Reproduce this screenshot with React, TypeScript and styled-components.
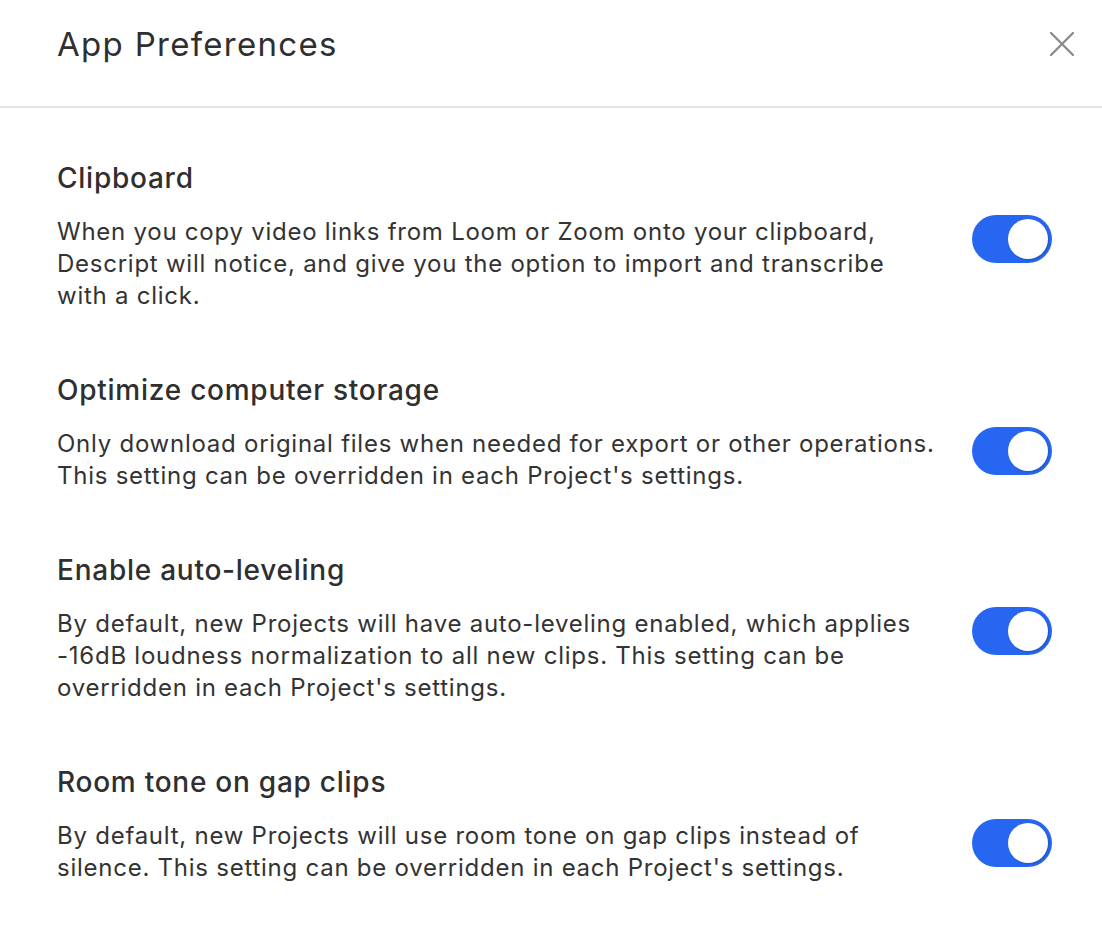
import React, { useState } from 'react';
import styled, { createGlobalStyle } from 'styled-components';

const GlobalStyle = createGlobalStyle`
  body {
    margin: 0;
    background: #ffffff;
    font-family: Inter, 'Liberation Sans', sans-serif;
    color: #2f2f2f;
  }
`;

interface ISetting {
  id: string;
  title: string;
  description: string;
}

const settings: ISetting[] = [
  {
    id: 'clipboard',
    title: 'Clipboard',
    description:
      'When you copy video links from Loom or Zoom onto your clipboard, Descript will notice, and give you the option to import and transcribe with a click.',
  },
  {
    id: 'storage',
    title: 'Optimize computer storage',
    description:
      "Only download original files when needed for export or other operations. This setting can be overridden in each Project's settings.",
  },
  {
    id: 'leveling',
    title: 'Enable auto-leveling',
    description:
      "By default, new Projects will have auto-leveling enabled, which applies -16dB loudness normalization to all new clips. This setting can be overridden in each Project's settings.",
  },
  {
    id: 'roomtone',
    title: 'Room tone on gap clips',
    description:
      "By default, new Projects will use room tone on gap clips instead of silence. This setting can be overridden in each Project's settings.",
  },
];

function App() {
  const [values, setValues] = useState<Record<string, boolean>>({
    clipboard: true,
    storage: true,
    leveling: true,
    roomtone: true,
  });

  return (
    <Container>
      <GlobalStyle />
      <Header>
        <Title>App Preferences</Title>
        <CloseButton aria-label="Close">
          <svg width="24" height="24" viewBox="0 0 24 24">
            <path
              d="M1 1 L23 23 M23 1 L1 23"
              stroke="#8c8c8c"
              strokeWidth="2.4"
              strokeLinecap="round"
            />
          </svg>
        </CloseButton>
      </Header>
      <Body>
        {settings.map((item) => (
          <Section key={item.id}>
            <Heading>{item.title}</Heading>
            <Row>
              <Description>{item.description}</Description>
              <Toggle
                on={values[item.id]}
                onClick={() =>
                  setValues({ ...values, [item.id]: !values[item.id] })
                }
              >
                <Knob on={values[item.id]} />
              </Toggle>
            </Row>
          </Section>
        ))}
      </Body>
    </Container>
  );
}

const Container = styled.div`
  width: 1102px;
  min-height: 936px;
  background: #ffffff;
`;

const Header = styled.div`
  height: 108px;
  border-bottom: 2px solid #e4e4e4;
  box-sizing: border-box;
  display: flex;
  align-items: center;
  justify-content: space-between;
  padding: 0 28px 18px 57px;
`;

const Title = styled.h1`
  margin: 0;
  font-size: 33px;
  letter-spacing: 1.3px;
  font-weight: 400;
  color: #2f2f2f;
`;

const CloseButton = styled.button`
  border: none;
  background: none;
  padding: 0;
  width: 24px;
  height: 24px;
  display: flex;
`;

const Body = styled.div`
  padding: 53px 50px 0 57px;
  display: flex;
  flex-direction: column;
  gap: 61px;
`;

const Section = styled.div`
  display: flex;
  flex-direction: column;
  gap: 21px;
`;

const Heading = styled.h2`
  margin: 0;
  font-size: 28px;
  line-height: 34px;
  letter-spacing: 0.75px;
  font-weight: 500;
  color: #2f2f2f;
`;

const Row = styled.div`
  display: flex;
  align-items: flex-start;
  justify-content: space-between;
`;

const Description = styled.p`
  margin: 0;
  width: 880px;
  font-size: 24px;
  line-height: 32px;
  letter-spacing: 0.75px;
  color: #333333;
`;

const Toggle = styled.button`
  flex-shrink: 0;
  width: 80px;
  height: 48px;
  border: none;
  border-radius: 24px;
  padding: 4px;
  margin-top: -1px;
  display: flex;
  justify-content: ${(props: { on: boolean }) =>
    props.on ? 'flex-end' : 'flex-start'};
  background-color: ${(props: { on: boolean }) =>
    props.on ? '#2666f1' : '#d0d0d0'};
  cursor: pointer;
`;

const Knob = styled.span`
  width: 40px;
  height: 40px;
  border-radius: 50%;
  background: #ffffff;
  box-shadow: ${(props: { on: boolean }) =>
    props.on ? '1px 1px 2px rgba(0, 0, 0, 0.2)' : 'none'};
`;

export default App;
